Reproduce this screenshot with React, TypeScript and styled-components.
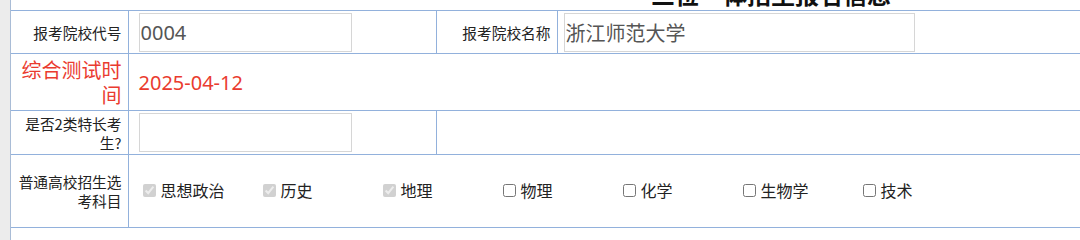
import React from "react";
import styled, { createGlobalStyle } from "styled-components";

const Global = createGlobalStyle`
  html, body { margin: 0; padding: 0; background: #ececec; overflow: hidden; }
  body { font-family: "Noto Sans", "Noto Sans CJK SC", sans-serif; color: #333; }
`;

const LINE = "#92b1dc";

const Page = styled.div`
  margin-left: 10px;
  width: 1520px;
  background: #fff;
  border-left: 1px solid #a9bcd6;
  margin-top: -22px;
`;

const Title = styled.h1`
  margin: 0;
  height: 32px;
  line-height: 32px;
  font-size: 24px;
  font-weight: 700;
  text-align: center;
  color: #111;
  font-family: "Noto Sans CJK SC", sans-serif;
`;

const Table = styled.table`
  width: 100%;
  border-collapse: collapse;
  table-layout: fixed;
`;

const Row = styled.tr<{ $h: number }>`
  height: ${(p) => p.$h}px;
`;

const Cell = styled.td<{ $first?: boolean }>`
  border-top: 1px solid ${LINE};
  border-bottom: 1px solid ${LINE};
  border-left: ${(p) => (p.$first ? "none" : `1px solid ${LINE}`)};
  padding: 0;
  vertical-align: middle;
`;

const LabelCell = styled(Cell)<{ $red?: boolean }>`
  text-align: right;
  padding-right: 6px;
  font-family: "Noto Sans CJK SC", sans-serif;
  font-size: ${(p) => (p.$red ? "20px" : "14.7px")};
  line-height: ${(p) => (p.$red ? "25px" : "19px")};
  color: ${(p) => (p.$red ? "#ea3b2f" : "#222")};
`;

const FieldCell = styled(Cell)<{ $pad?: number }>`
  padding-left: ${(p) => p.$pad ?? 10}px;
`;

const TextInput = styled.input<{ $w: number }>`
  box-sizing: border-box;
  width: ${(p) => p.$w}px;
  height: 39px;
  border: 1px solid #d6d6d6;
  padding: 0 1px;
  font-family: "Noto Sans", "Noto Sans CJK SC", sans-serif;
  font-size: 20px;
  color: #555;
  background: #fff;
  outline: none;
  display: block;
`;

const DateText = styled.span`
  font-family: "Noto Sans", "Noto Sans CJK SC", sans-serif;
  font-size: 20px;
  color: #ea3b2f;
`;

const Options = styled.div`
  display: flex;
  padding-left: 4px;
  margin-top: -2px;
`;

const Option = styled.label`
  width: 120px;
  display: flex;
  align-items: center;
  font-family: "Noto Sans CJK SC", sans-serif;
  font-size: 16px;
  color: #222;
`;

const Box = styled.input`
  margin: 0 5px 0 0;
  width: 13px;
  height: 13px;
`;

const subjects: { name: string; checked: boolean }[] = [
  { name: "思想政治", checked: true },
  { name: "历史", checked: true },
  { name: "地理", checked: true },
  { name: "物理", checked: false },
  { name: "化学", checked: false },
  { name: "生物学", checked: false },
  { name: "技术", checked: false },
];

export default function App() {
  return (
    <>
      <Global />
      <Page>
        <Title>三位一体招生报名信息</Title>
        <Table>
          <colgroup>
            <col style={{ width: 117 }} />
            <col style={{ width: 308 }} />
            <col style={{ width: 121 }} />
            <col />
          </colgroup>
          <tbody>
            <Row $h={43}>
              <LabelCell $first>报考院校代号</LabelCell>
              <FieldCell>
                <TextInput $w={213} defaultValue="0004" readOnly />
              </FieldCell>
              <LabelCell>报考院校名称</LabelCell>
              <FieldCell $pad={6}>
                <TextInput $w={351} defaultValue="浙江师范大学" readOnly />
              </FieldCell>
            </Row>
            <Row $h={57}>
              <LabelCell $first $red>
                综合测试时间
              </LabelCell>
              <FieldCell colSpan={3}>
                <DateText>2025-04-12</DateText>
              </FieldCell>
            </Row>
            <Row $h={44}>
              <LabelCell $first>是否2类特长考生?</LabelCell>
              <FieldCell>
                <TextInput $w={213} readOnly />
              </FieldCell>
              <FieldCell colSpan={2} />
            </Row>
            <Row $h={73}>
              <LabelCell $first>普通高校招生选考科目</LabelCell>
              <FieldCell colSpan={3}>
                <Options>
                  {subjects.map((s) => (
                    <Option key={s.name}>
                      <Box
                        type="checkbox"
                        defaultChecked={s.checked}
                        disabled={s.checked}
                      />
                      {s.name}
                    </Option>
                  ))}
                </Options>
              </FieldCell>
            </Row>
            <Row $h={40}>
              <Cell $first colSpan={4} />
            </Row>
          </tbody>
        </Table>
      </Page>
    </>
  );
}
